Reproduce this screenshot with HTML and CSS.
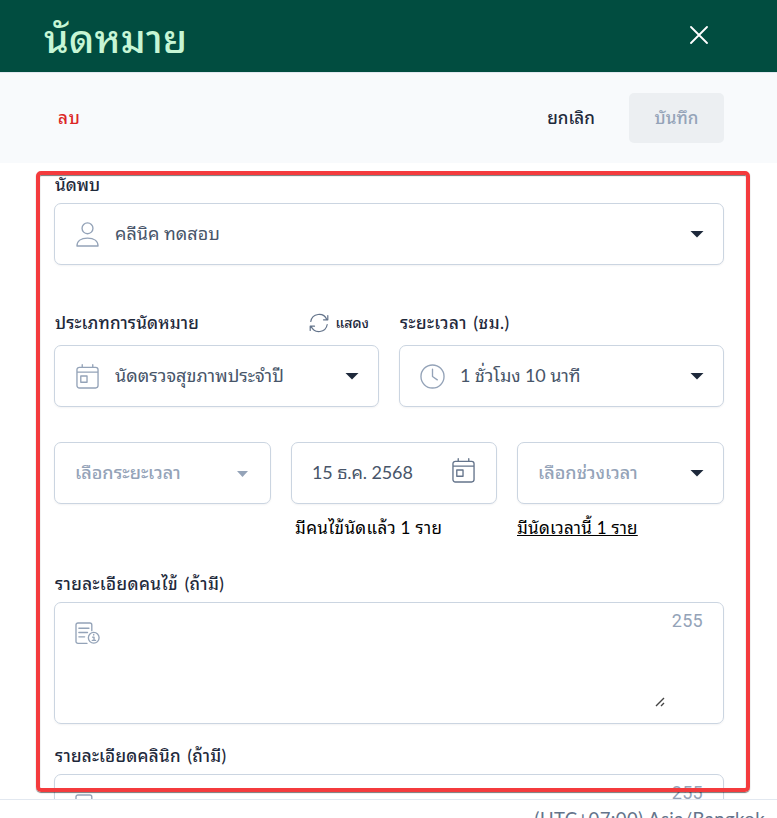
FILE: index.html
```html
<!DOCTYPE html>
<html lang="th">
<head>
<meta charset="utf-8">
<title>นัดหมาย</title>
<link rel="stylesheet" href="styles.css">
</head>
<body>
<svg class="defs" width="0" height="0">
  <symbol id="calendar" viewBox="0 0 24 26"><path d="M3.500 3.500h17A2.500 2.500 0 0 1 23 6v16.500a2.500 2.500 0 0 1-2.500 2.500h-17A2.500 2.500 0 0 1 1 22.500V6A2.500 2.500 0 0 1 3.500 3.500zM1 8.500h22M6.500.7v2.800M17.500.7v2.800M5 12.500h6.500v6.500H5z"/></symbol>
  <symbol id="note" viewBox="0 0 26 24"><path d="M12.500 22.300H3a2 2 0 0 1-2-2V3a2 2 0 0 1 2-2h12.500a2 2 0 0 1 2 2v6M4 6.500h10.500M4 11h9M4 15.500h6M19.500 13v.6M18.300 15.800h1.500v3.300M18 19.200h3.400"/><circle cx="19.500" cy="16.500" r="5.600"/></symbol>
</svg>
<div class="dialog">
  <header class="header">
    <h1 class="title"><span>นัดหมาย</span></h1>
    <svg class="close" viewBox="0 0 18 18"><path d="M1 1l16 16M17 1L1 17"/></svg>
  </header>
  <div class="toolbar">
    <button class="btn delete">ลบ</button>
    <button class="btn cancel">ยกเลิก</button>
    <button class="btn save">บันทึก</button>
  </div>
  <main class="content">
    <section class="group doctor">
      <div class="label"><span class="t-meet">นัดพบ</span></div>
      <div class="box">
        <svg class="icon" viewBox="0 0 24 26"><circle cx="12" cy="6.500" r="5.700"/><path d="M1 25c0-5 4-8.300 11-8.300S23 20 23 25z"/></svg>
        <span class="value t-doctor">คลีนิค ทดสอบ</span>
        <i class="arrow"></i>
      </div>
    </section>
    <div class="pair">
      <section class="group">
        <div class="label"><span class="t-type">ประเภทการนัดหมาย</span>
          <span class="refresh"><svg viewBox="0 0 20 20"><path d="M1.800 8.500A8.400 8.400 0 0 1 17.800 6.500M18.800 2.500v4.300h-4.300M18.200 11.500A8.400 8.400 0 0 1 2.200 13.500M1.200 17.500v-4.300h4.300"/></svg><span>แสดง</span></span>
        </div>
        <div class="box">
          <svg class="icon"><use href="#calendar"/></svg>
          <span class="value t-check">นัดตรวจสุขภาพประจำปี</span>
          <i class="arrow"></i>
        </div>
      </section>
      <section class="group">
        <div class="label"><span class="t-duration">ระยะเวลา (ชม.)</span></div>
        <div class="box">
          <svg class="icon clock" viewBox="0 0 26 26"><circle cx="13" cy="13" r="12"/><path d="M13 5.500V13l5 3.500"/></svg>
          <span class="value t-hours">1 ชั่วโมง 10 นาที</span>
          <i class="arrow"></i>
        </div>
      </section>
    </div>
    <div class="triple">
      <div class="box muted"><span class="value t-range">เลือกระยะเวลา</span><i class="arrow small"></i></div>
      <div>
        <div class="box"><span class="value t-date">15 ธ.ค. 2568</span><svg class="icon date-icon"><use href="#calendar"/></svg></div>
        <div class="hint booked"><span class="t-booked">มีคนไข้นัดแล้ว 1 ราย</span></div>
      </div>
      <div>
        <div class="box muted"><span class="value t-slot">เลือกช่วงเวลา</span><i class="arrow"></i></div>
        <div class="hint"><a class="t-same">มีนัดเวลานี้ 1 ราย</a></div>
      </div>
    </div>
    <section class="group details">
      <div class="label"><span class="t-patient">รายละเอียดคนไข้ (ถ้ามี)</span></div>
      <div class="area">
        <svg class="note"><use href="#note"/></svg>
        <svg class="grip" viewBox="0 0 10 10"><path d="M1 9l8-8M6 9l3-3"/></svg>
        <span class="count">255</span>
      </div>
    </section>
    <section class="group details">
      <div class="label"><span class="t-clinic">รายละเอียดคลินิก (ถ้ามี)</span></div>
      <div class="area">
        <svg class="note"><use href="#note"/></svg>
        <svg class="grip" viewBox="0 0 10 10"><path d="M1 9l8-8M6 9l3-3"/></svg>
        <span class="count">255</span>
      </div>
    </section>
  </main>
  <footer class="footer"><span>(UTC+07:00) Asia/Bangkok</span></footer>
  <div class="highlight"></div>
</div>
</body>
</html>
```
FILE: styles.css
```css
* { box-sizing: border-box; }
body { margin: 0; font-family: Lato, Tahoma, "Noto Sans Thai Looped", "Noto Looped Thai", Loma, Waree, "Tlwg Typo", Garuda, Umpush, "Droid Sans Thai", sans-serif; font-size: 18px; color: #1e293b; background: #fff; }
.defs { position: absolute; }
.dialog { position: relative; height: 818px; overflow: hidden; display: flex; flex-direction: column; }
.header { flex: 0 0 72px; height: 72px; min-height: 0; background: #014d40; display: flex; justify-content: space-between; padding: 0 69px 0 44px; }
.title { margin: 0; height: 72px; color: #c6f6d5; font-size: 39px; letter-spacing: .2px; font-weight: 500; line-height: 76px; white-space: nowrap; }
svg { fill: none; stroke: #94a3b8; stroke-width: 1.4; stroke-linecap: round; stroke-linejoin: round; }
.close { width: 18px; height: 18px; margin-top: 26px; stroke: #fff; stroke-width: 1.8; }
.toolbar { flex: 0 0 91px; border-top: 1px solid #e2e8f0; background: #f8fafc; padding: 20px 53px 0 58px; display: flex; align-items: flex-start; }
.btn { font: inherit; font-size: 17px; border: 0; padding: 0 0 4px; background: none; height: 50px; white-space: nowrap; font-weight: 500; }
.delete { color: #dc2626; margin-right: auto; letter-spacing: .8px; }
.cancel { color: #1e293b; width: 48px; margin-right: 34px; }
.save { width: 95px; border-radius: 5px; background: #eceff2; color: #94a3b8; }
.content { flex: 0 0 636px; overflow: hidden; padding: 10px 53px 0 54px; }
.label { height: 30px; line-height: 24px; font-size: 17px; font-weight: 500; display: flex; justify-content: space-between; white-space: nowrap; padding-left: 1px; }
.label > span, .value, .hint > *, .title > span { display: inline-block; }
.t-type { letter-spacing: .15px; }
.t-duration { letter-spacing: .45px; word-spacing: 2px; }
.t-patient { letter-spacing: .4px; word-spacing: 2px; }
.t-clinic { letter-spacing: .25px; word-spacing: 2px; }
.t-booked { letter-spacing: .35px; }
.t-same { letter-spacing: .25px; }
.box { height: 62px; border: 1px solid #cbd5e1; border-radius: 7px; box-shadow: 0 1px 2px #0f172a0d; background: #fff; padding: 0 20px; display: flex; align-items: center; white-space: nowrap; }
.icon { flex: 0 0 23px; width: 23px; height: 25px; margin: 0 16px 0 1px; }
.clock { flex-basis: 25px; width: 25px; margin: 1px 15px 0 0; }
.value { color: #475569; flex: 1 1 0; min-width: 0; padding-bottom: 4px; }
.t-hours, .t-date { letter-spacing: -.1px; }
.arrow { width: 14px; height: 7px; margin-right: -1px; background: #1e293b; clip-path: polygon(0 0, 100% 0, 50% 100%); }
.arrow.small { width: 11px; height: 6px; background: #94a3b8; margin: 2px 2px 0 0; }
.pair { display: grid; grid-template-columns: 325px 325px; gap: 20px; margin-top: 50px; }
.pair .label { height: 30px; line-height: 16px; }
.refresh { display: flex !important; align-items: center; height: 16px; font-size: 14px; gap: 6px; padding-right: 10px; }
.refresh svg { width: 20px; height: 20px; stroke: #64748b; stroke-width: 1.2; }
.triple { display: grid; grid-template-columns: 217px 206px 207px; gap: 20px; margin-top: 35px; }
.muted .value { color: #94a3b8; font-weight: 500; }
.date-icon { stroke: #64748b; margin: -5px 1px 0 0; }
.hint { color: #000; font-size: 17px; line-height: 24px; height: 24px; margin-top: 12px; white-space: nowrap; }
.booked { padding-left: 4px; }
.hint a { text-decoration: underline; }
.details { margin-top: 32px; }
.details ~ .details { margin-top: 20px; }
.area { height: 122px; border: 1px solid #cbd5e1; border-radius: 7px; box-shadow: 0 1px 2px #0f172a0d; padding: 0 20px; display: flex; }
.note { width: 25px; height: 23px; margin-top: 19px; }
.grip { width: 10px; height: 10px; margin: 94px 7px 0 auto; stroke: #444; stroke-linecap: butt; }
.count { color: #94a3b8; font-family: Roboto, sans-serif; font-size: 18px; line-height: 20px; letter-spacing: .3px; margin-top: 8px; }
.footer { height: 19px; border-top: 1px solid #e2e8f0; text-align: right; padding: 7px 12px 0 0; color: #64748b; font-size: 18.500px; letter-spacing: .4px; line-height: 24px; white-space: nowrap; }
.highlight { position: absolute; left: 36px; top: 171px; width: 714px; height: 621px; border: 4px solid #f43b3d; border-radius: 5px; box-shadow: 0 1px 1px #0008, inset 0 1px 1px #0008; pointer-events: none; }
```
